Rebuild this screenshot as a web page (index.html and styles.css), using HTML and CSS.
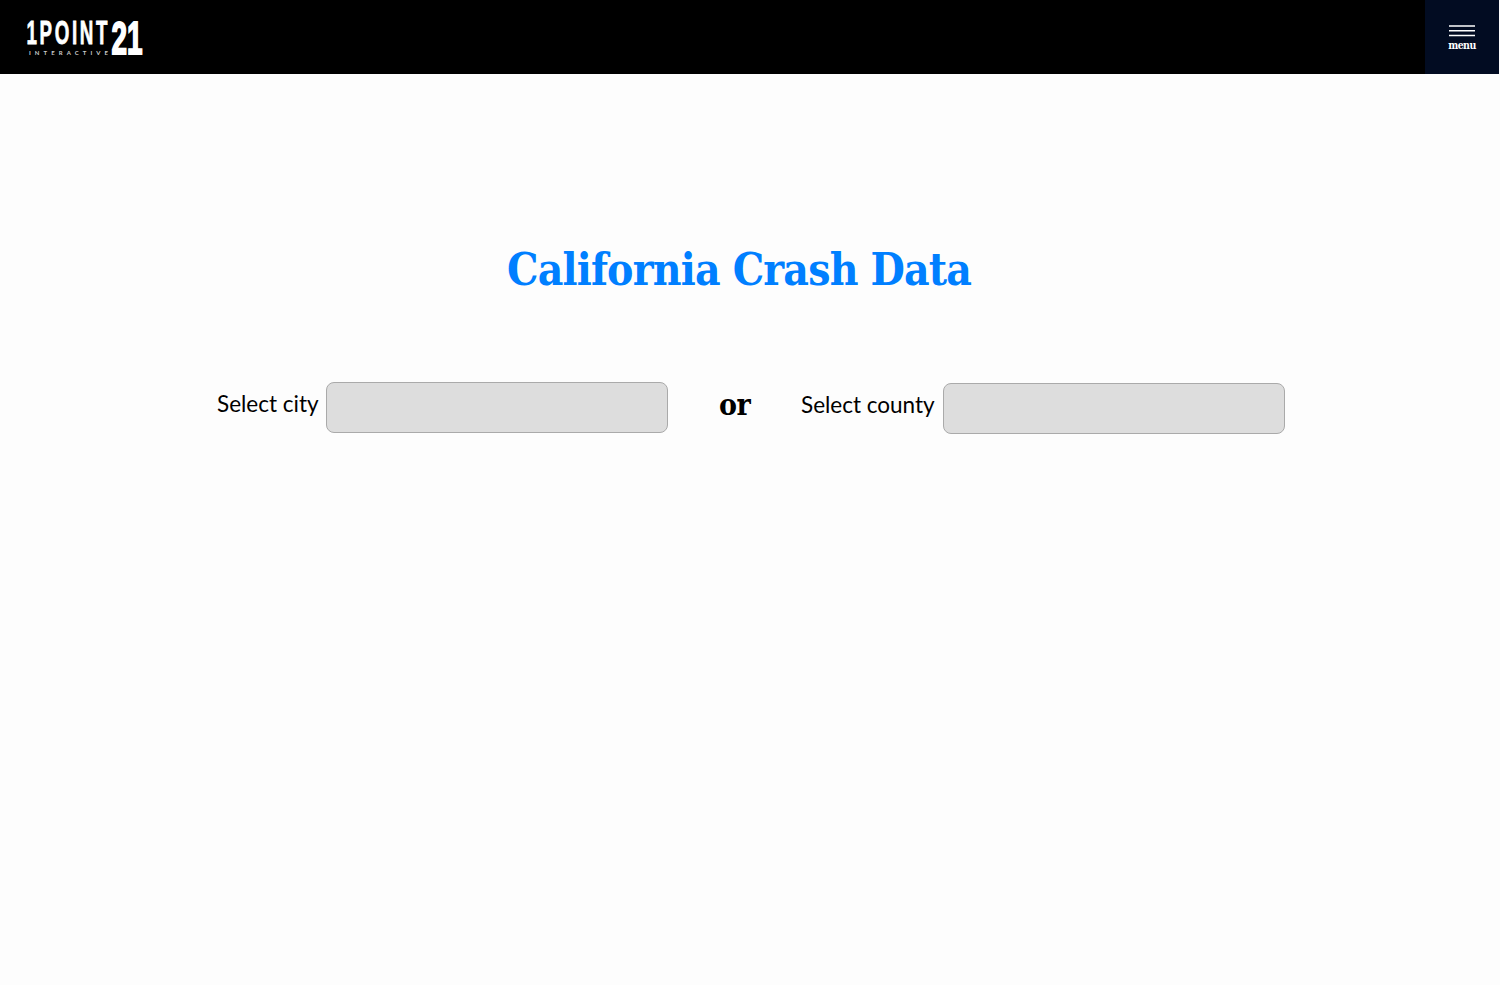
FILE: index.html
```html
<!DOCTYPE html>
<html lang="en">
<head>
<meta charset="utf-8">
<title>California Crash Data</title>
<link rel="stylesheet" href="styles.css">
</head>
<body>
<header class="header">
  <a class="brand" aria-label="1Point21 Interactive">
    <svg class="logo" width="120" height="40" viewBox="0 0 120 40">
      <text class="logo-word" transform="translate(.5 25.5) scale(.75 1.3)" font-size="25" textLength="108" lengthAdjust="spacing">1POINT</text>
      <text class="logo-number" transform="translate(85.5 36)" font-size="47" textLength="31" lengthAdjust="spacingAndGlyphs">21</text>
      <text class="logo-sub" x="3" y="36.5" font-size="6" textLength="79">INTERACTIVE</text>
    </svg>
  </a>
  <button class="menu" type="button">
    <svg width="26" height="12" viewBox="0 0 26 12"><path d="M0 1h26M0 5.75h26M0 10.5h26" stroke="#fff" stroke-width="1.4"/></svg>
    <span class="menu-label">menu</span>
  </button>
</header>
<main class="main">
  <h1 class="title">California Crash Data</h1>
  <form class="filters">
    <label class="field"><span class="label city">Select city</span><span class="select"></span></label>
    <span class="or">or</span>
    <label class="field county-field"><span class="label county">Select county</span><span class="select"></span></label>
  </form>
</main>
</body>
</html>
```
FILE: styles.css
```css
* { box-sizing: border-box; }
body { margin: 0; background: #fdfdfd; color: #000; font-family: Lato, sans-serif; overflow: hidden; }
.header { height: 74px; background: #000; display: flex; justify-content: space-between; margin-right: 1px; }
.brand { padding: 18px 0 0 26px; }
.logo { display: block; fill: #fff; overflow: visible; }
.logo-word, .logo-number { font-family: "Liberation Sans Narrow", "Liberation Sans", sans-serif; font-weight: 700; stroke: #fff; }
.logo-word { stroke-width: 0.6px; }
.logo-number { stroke-width: 2px; }
.logo-sub { font-family: Lato, sans-serif; font-weight: 700; fill: #ccc; }
.menu { width: 74px; height: 74px; border: 0; padding: 25px 0 0; background: #020c22; color: #fff; display: flex; flex-direction: column; align-items: center; }
.menu svg { display: block; flex: none; }
.menu-label { font: 700 10.5px/14px "DejaVu Serif Condensed", "DejaVu Serif", serif; letter-spacing: -0.6px; margin-top: 1px; }
.title { margin: 0; padding: 166px 0 0 507px; font: 700 44px/60px "DejaVu Serif Condensed", "DejaVu Serif", serif; letter-spacing: -0.83px; color: #007fff; white-space: nowrap; }
.filters { display: flex; align-items: flex-start; padding: 82px 0 0 217px; }
.field { display: flex; }
.county-field { margin-top: 1px; }
.label { font-size: 22.5px; line-height: 43px; white-space: nowrap; }
.city { width: 109px; }
.county { width: 142px; }
.select { width: 342px; height: 51px; border: 1px solid #aaa; border-radius: 8px; background: #ddd; }
.or { width: 82px; margin-left: 51px; font: 700 30px/46px "DejaVu Serif Condensed", "DejaVu Serif", serif; letter-spacing: -0.6px; }
```
